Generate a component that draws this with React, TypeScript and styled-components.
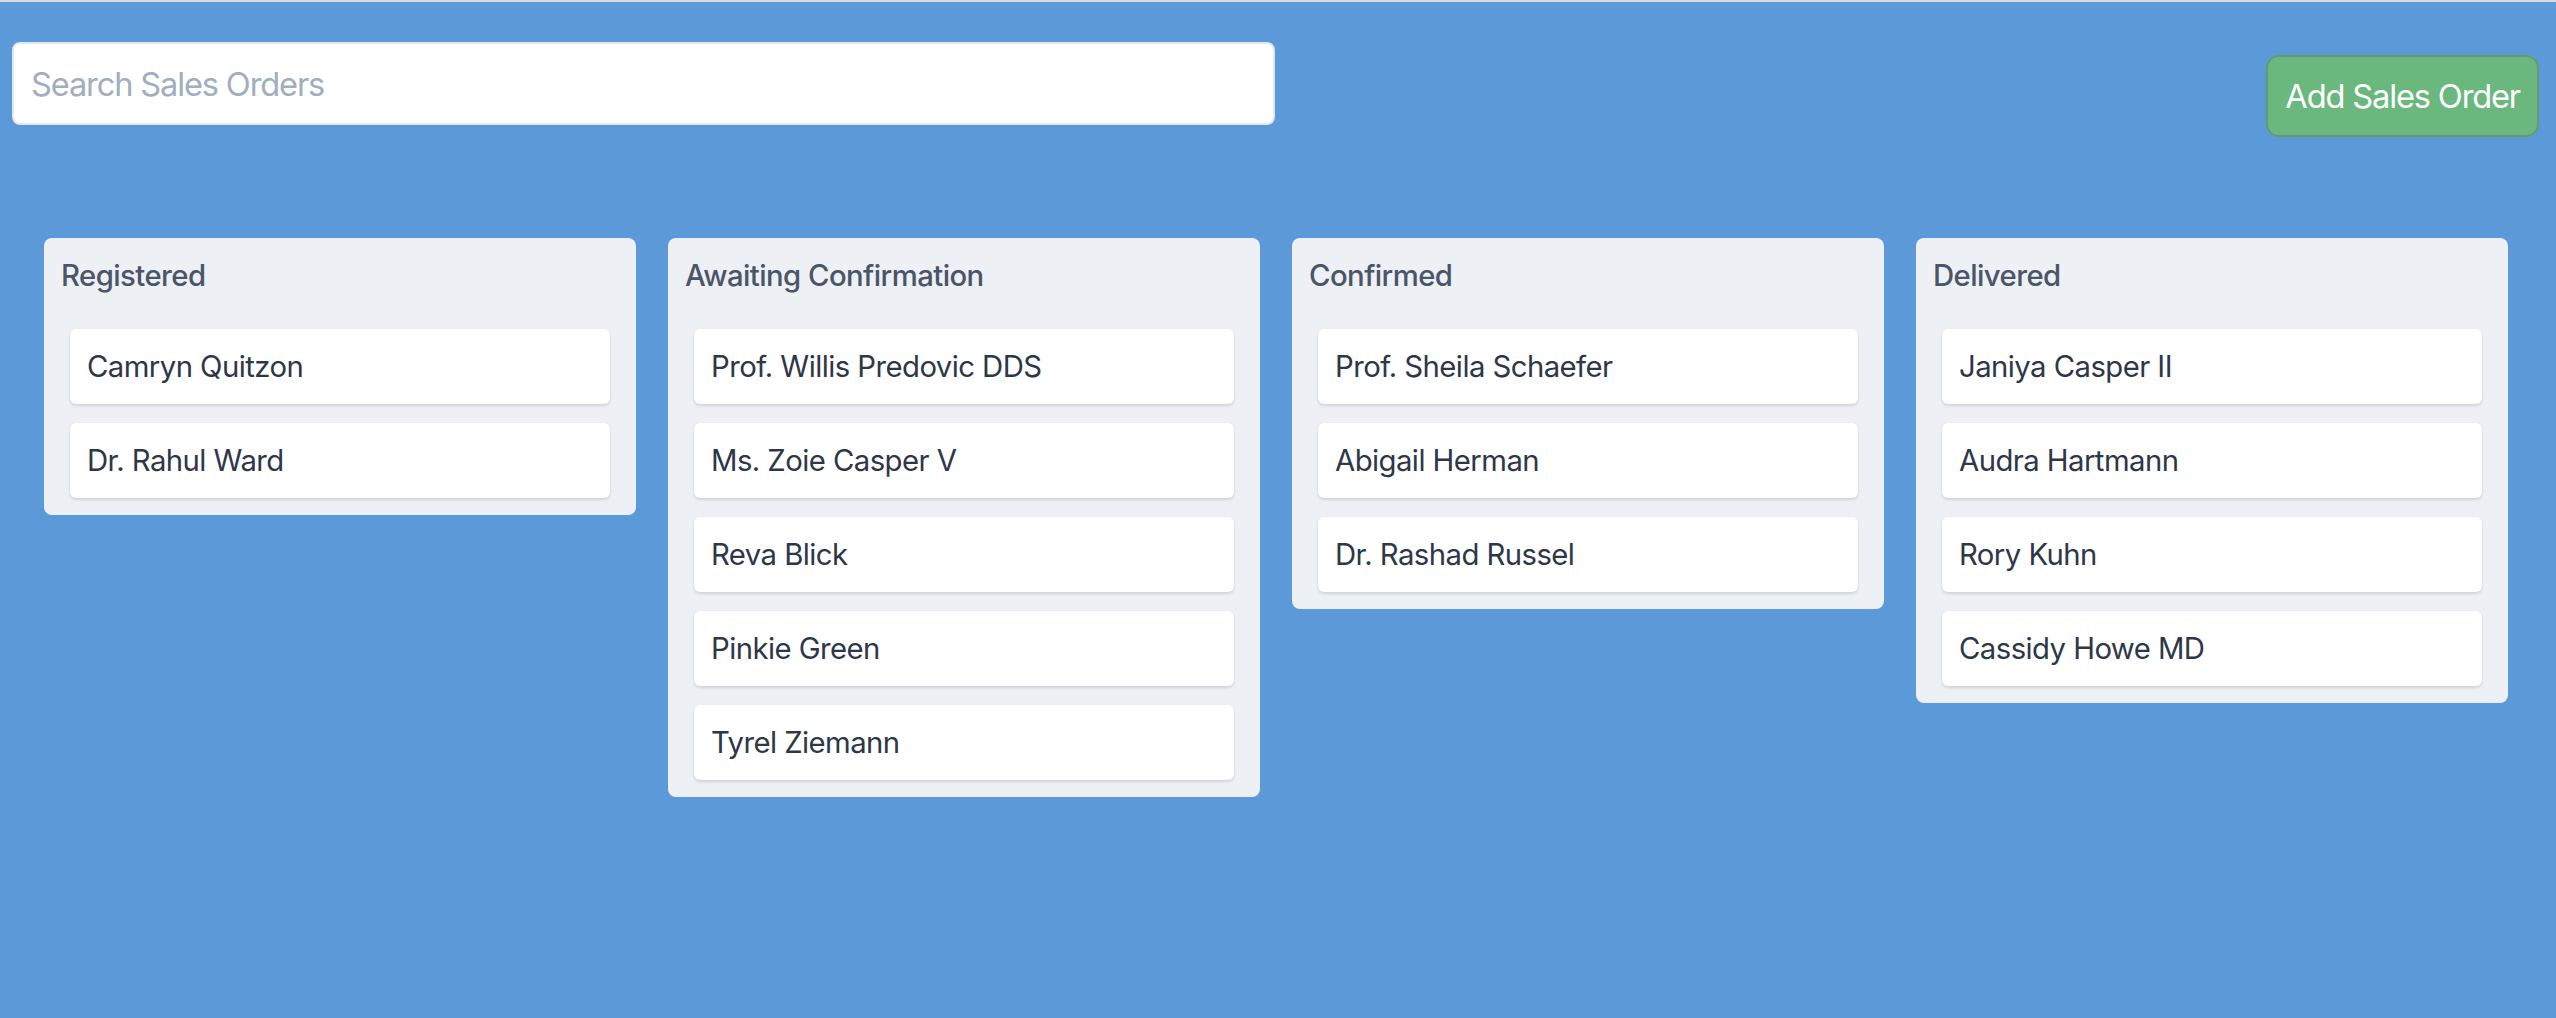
import React from 'react';
import styled, { createGlobalStyle } from 'styled-components';

const GlobalStyle = createGlobalStyle`
  html, body {
    margin: 0;
    padding: 0;
    background: #5c99d9;
  }
  body {
    font-family: Inter, "Noto Sans", "Liberation Sans", sans-serif;
    letter-spacing: -0.035em;
  }
  * {
    box-sizing: border-box;
  }
`;

const Page = styled.div`
  min-height: 1018px;
  border-top: 2px solid #d9dadb;
  background: #5c99d9;
`;

const Toolbar = styled.div`
  display: flex;
  justify-content: space-between;
  align-items: flex-start;
  padding: 0 17px 0 12px;
`;

const SearchInput = styled.input`
  margin-top: 40px;
  width: 1263px;
  height: 83px;
  padding: 0 17px;
  border: 2px solid #e2e8f0;
  border-radius: 8px;
  background: #fff;
  font-family: inherit;
  font-size: 32.6px;
  letter-spacing: -0.035em;
  color: #2d3748;
  outline: none;

  &::placeholder {
    color: #a0aec0;
  }
`;

const AddButton = styled.button`
  margin-top: 53px;
  height: 82px;
  padding: 0 17px;
  border: 2px solid #5c9f6d;
  border-radius: 13px;
  background: #6ab87e;
  color: #fff;
  font-family: inherit;
  font-size: 32.6px;
  letter-spacing: -0.035em;
  cursor: pointer;
`;

const Board = styled.div`
  display: grid;
  grid-template-columns: repeat(4, 592px);
  column-gap: 32px;
  align-items: start;
  padding: 0 0 0 44px;
  margin-top: 101px;
`;

const Column = styled.section`
  background: #edf0f5;
  border-radius: 8px;
  padding: 16px 26px 17px;
`;

const ColumnTitle = styled.h3`
  margin: 0 0 31px -9px;
  font-size: 29.3px;
  line-height: 44px;
  font-weight: 500;
  color: #4a5568;
`;

const CardList = styled.div`
  display: flex;
  flex-direction: column;
  gap: 19px;
`;

const OrderCard = styled.div`
  height: 75px;
  display: flex;
  align-items: center;
  padding: 0 17px;
  background: #fff;
  border-radius: 6px;
  box-shadow: 0 2px 3px rgba(0, 0, 0, 0.12), 0 0 1px rgba(0, 0, 0, 0.08);
  font-size: 29.3px;
  color: #2d3748;
`;

const columns = [
  { title: 'Registered', orders: ['Camryn Quitzon', 'Dr. Rahul Ward'] },
  {
    title: 'Awaiting Confirmation',
    orders: [
      'Prof. Willis Predovic DDS',
      'Ms. Zoie Casper V',
      'Reva Blick',
      'Pinkie Green',
      'Tyrel Ziemann',
    ],
  },
  {
    title: 'Confirmed',
    orders: ['Prof. Sheila Schaefer', 'Abigail Herman', 'Dr. Rashad Russel'],
  },
  {
    title: 'Delivered',
    orders: ['Janiya Casper II', 'Audra Hartmann', 'Rory Kuhn', 'Cassidy Howe MD'],
  },
];

export default function App() {
  return (
    <>
      <GlobalStyle />
      <Page>
        <Toolbar>
          <SearchInput placeholder="Search Sales Orders" />
          <AddButton>Add Sales Order</AddButton>
        </Toolbar>
        <Board>
          {columns.map((col) => (
            <Column key={col.title}>
              <ColumnTitle>{col.title}</ColumnTitle>
              <CardList>
                {col.orders.map((name) => (
                  <OrderCard key={name}>{name}</OrderCard>
                ))}
              </CardList>
            </Column>
          ))}
        </Board>
      </Page>
    </>
  );
}
